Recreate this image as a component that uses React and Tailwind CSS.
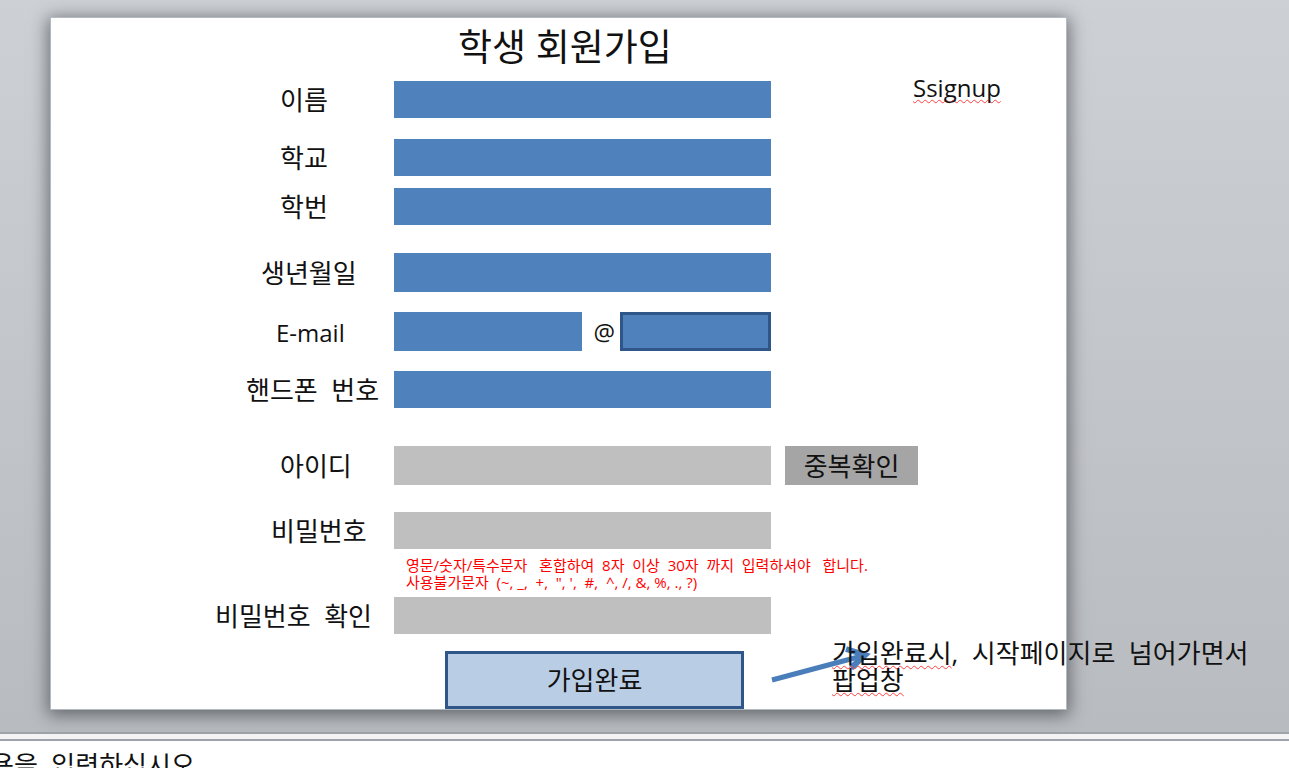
import React from "react";

const blue = "bg-[#4f81bd]";
const grey = "bg-[#bfbfbf]";

function Row({ id, label, indent, gap = "", height = "h-[37px]", tone = blue, type = "text", children, aside }) {
  return (
    <div
      className={`grid grid-cols-[minmax(0,343fr)_minmax(0,377fr)_minmax(0,295fr)] items-center ${gap} ${height}`}
    >
      <label htmlFor={id} className={`whitespace-pre text-[26px] leading-[36px] ${indent}`}>
        {label}
      </label>
      {children || (
        <input id={id} type={type} className={`h-full w-full min-w-0 px-2 text-xl outline-none ${tone}`} />
      )}
      {aside}
    </div>
  );
}

const misspelt = "underline decoration-[#ff4040] decoration-wavy decoration-1 underline-offset-2 [text-decoration-skip-ink:none]";

export default function App() {
  return (
    <div className="flex h-screen flex-col overflow-hidden bg-white font-['Open_Sans','Noto_Sans_CJK_KR',sans-serif] text-[#111111]">
      <main className="shrink-0 bg-linear-to-b from-[#cdd0d5] to-[#b8bbc0] pt-[17px] pr-[222px] pb-[22px] pl-[50px]">
        <form
          onSubmit={(e) => e.preventDefault()}
          className="relative border border-[#b4bac2] bg-white shadow-[0_3px_16px_2px_rgba(40,44,48,0.6)]"
        >
          <h1 className="h-[63px] pl-[407px] text-[37px] leading-[58px]">학생 회원가입</h1>

          <Row id="name" label="이름" indent="pl-[229px]" />
          <Row id="school" label="학교" indent="pl-[229px]" gap="mt-[21px]" />
          <Row id="number" label="학번" indent="pl-[229px]" gap="mt-3" />
          <Row id="birth" label="생년월일" indent="pl-[210px]" gap="mt-7" height="h-[39px]" />
          <Row id="email" label={<span className="text-2xl">E-mail</span>} indent="pl-[225px]" gap="mt-5" height="h-[39px]">
            <div className="grid h-[39px] grid-cols-[minmax(0,188fr)_minmax(0,39fr)_minmax(0,151fr)] items-center">
              <input id="email" type="text" className="h-full w-full bg-[#4f81bd] px-2 text-xl outline-none" />
              <span className="pl-3 text-2xl">@</span>
              <input
                type="text"
                aria-label="E-mail 도메인"
                className="h-full w-full border-[3px] border-[#2f5688] bg-[#4f81bd] px-2 text-xl outline-none"
              />
            </div>
          </Row>
          <Row id="phone" label="핸드폰  번호" indent="pl-[195px]" gap="mt-5" type="tel" />
          <Row
            id="userid"
            label="아이디"
            indent="pl-[229px]"
            gap="mt-[38px]"
            height="h-[39px]"
            tone={grey}
            aside={
              <button type="button" className="ml-[14px] h-full w-[133px] bg-[#a5a5a5] text-[26px] leading-[36px]">
                중복확인
              </button>
            }
          />
          <Row id="password" label="비밀번호" indent="pl-[220px]" gap="mt-[27px]" tone={grey} type="password" />
          <p className="mt-2 pl-[355px] text-[15px] leading-[17px] whitespace-pre text-[#ff0000]">
            {"영문/숫자/특수문자   혼합하여  8자  이상  30자  까지  입력하셔야   합니다.\n사용불가문자  (~, _,  +,  \", ',  #,  ^, /, &, %, ., ?)"}
          </p>
          <Row id="confirm" label="비밀번호  확인" indent="pl-[164px]" gap="mt-[6px]" tone={grey} type="password" />
          <button
            type="submit"
            className="mt-[17px] ml-[394px] block h-[58px] w-[299px] border-[3px] border-[#2f5688] bg-[#b9cde5] text-[26px] leading-[36px]"
          >
            가입완료
          </button>

          <p className={`absolute top-[54px] left-[862px] text-2xl ${misspelt}`}>Ssignup</p>
          <svg
            aria-hidden="true"
            className="absolute top-[620px] left-[714px] h-[60px] w-[120px]"
            viewBox="765 638 120 60"
            fill="none"
            stroke="#4a7ebb"
          >
            <path d="M772 680 L862 656" strokeWidth="5" />
            <path d="M846 649 L865 655 L851 668" strokeWidth="6" />
          </svg>
          <p className="absolute top-[622px] left-[781px] text-[26px] leading-[27px] whitespace-pre">
            <span className={misspelt}>가입완료시</span>
            {",  시작페이지로  넘어가면서\n"}
            <span className={misspelt}>팝업창</span>
          </p>
        </form>
      </main>
      <div className="h-[9px] shrink-0 border-y-2 border-[#9da3a9] bg-[#f4f4f4]" />
      <textarea
        aria-label="슬라이드 노트"
        defaultValue="용을  입력하십시오"
        className="-ml-[10px] min-h-0 flex-1 resize-none overflow-hidden bg-white pt-2 text-[26px] leading-[32px] outline-none"
      />
    </div>
  );
}
